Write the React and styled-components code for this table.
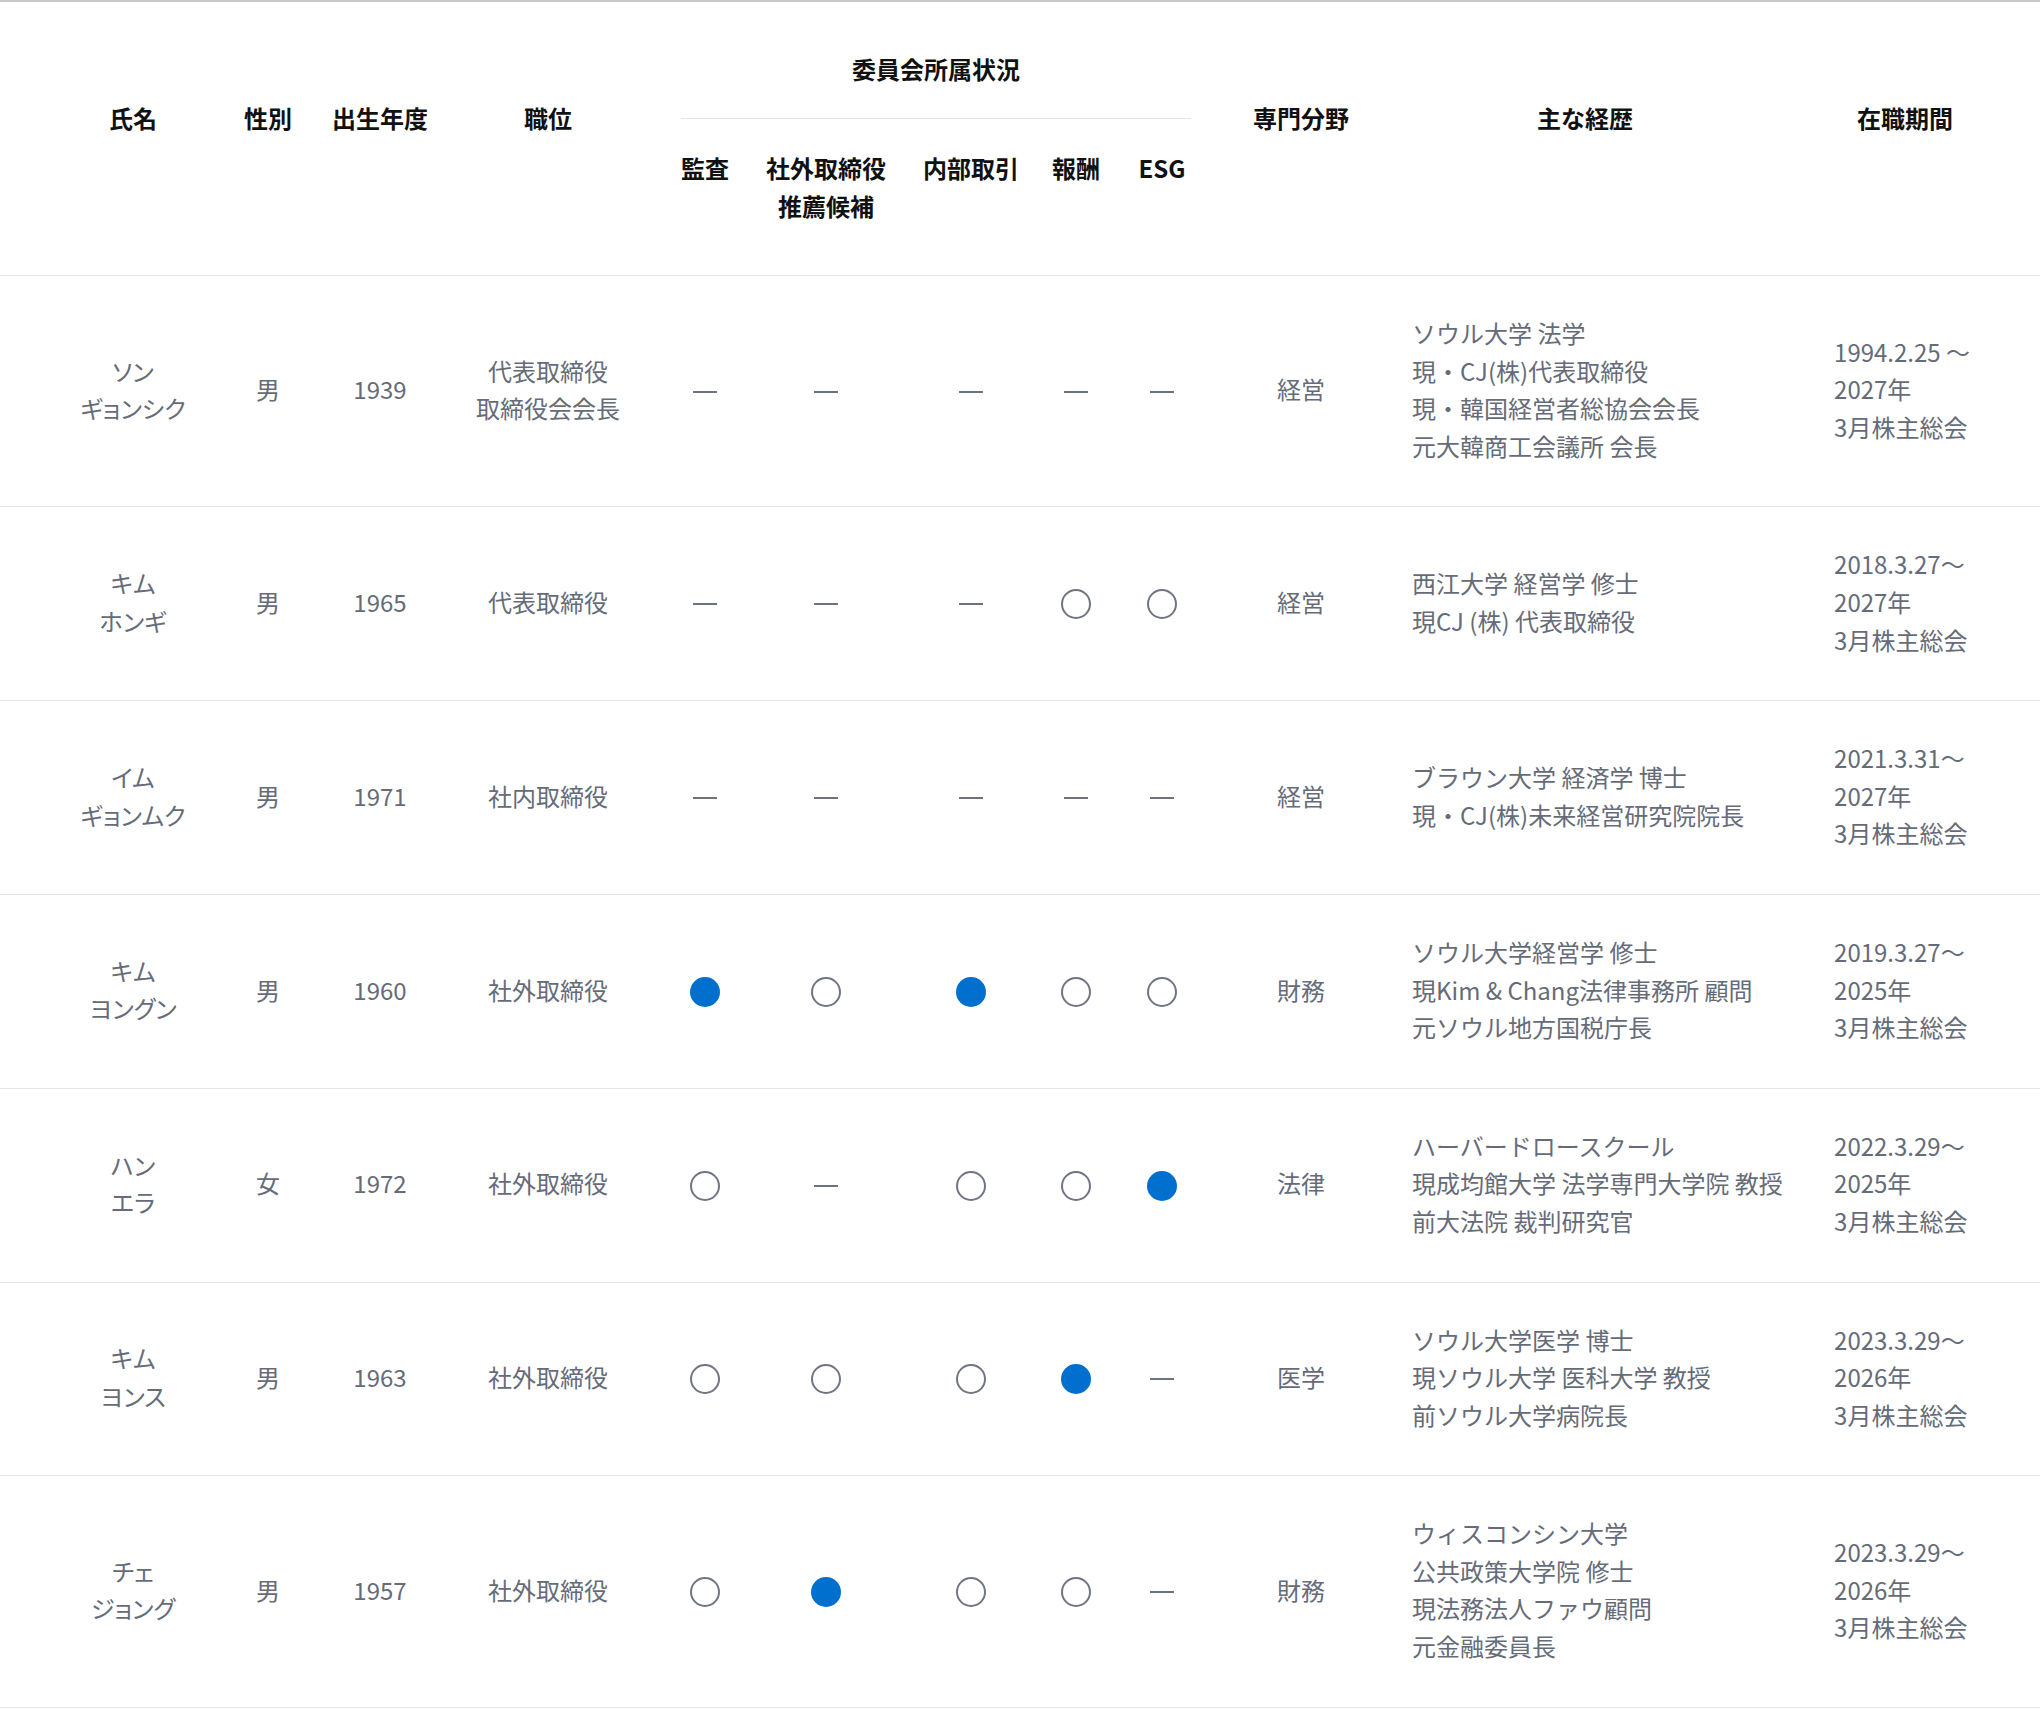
import React from 'react';
import styled, { createGlobalStyle } from 'styled-components';

const GlobalStyle = createGlobalStyle`
  body {
    margin: 0;
    background: #fff;
    font-family: "Noto Sans CJK JP", "Noto Sans", sans-serif;
  }
`;

const Wrapper = styled.div`
  width: 2040px;
  border-top: 2px solid #c9c9c9;
`;

const Table = styled.table`
  width: 100%;
  table-layout: fixed;
  border-collapse: separate;
  border-spacing: 0;
`;

const HeadCell = styled.th`
  padding: ${(p) => (p.$span ? '97px 0 0' : '30px 0 50px')};
  padding-right: ${(p) => p.$padRight || 0}px;
  padding-left: ${(p) => p.$padLeft || 0}px;
  vertical-align: top;
  text-align: center;
  font-size: 24px;
  line-height: 38px;
  font-weight: 700;
  color: #111;
  border-bottom: 1px solid #e5e5e5;
`;

const GroupCell = styled.th`
  padding: 48px 29px 0;
  vertical-align: top;
  font-size: 24px;
  line-height: 38px;
  font-weight: 700;
  color: #111;
`;

const GroupTitle = styled.div`
  padding-bottom: 30px;
  border-bottom: 1px solid #e5e5e5;
`;

const Cell = styled.td`
  padding: 38px 0 42px;
  padding-left: ${(p) => p.$padLeft || 0}px;
  vertical-align: middle;
  text-align: ${(p) => p.$align || 'center'};
  font-size: 24px;
  line-height: 37.6px;
  color: #656b78;
  border-bottom: 1px solid #e5e5e5;
  font-feature-settings: ${(p) => (p.$palt ? '"palt"' : 'normal')};
`;

const Line = styled.div`
  white-space: nowrap;
`;

const Dash = styled.span`
  display: block;
  width: 24px;
  height: 2px;
  margin: 5px auto 0;
  background: #6b7280;
`;

const Circle = styled.span`
  display: block;
  box-sizing: border-box;
  width: 30px;
  height: 30px;
  margin: 5px auto 0;
  border-radius: 50%;
  border: ${(p) => (p.$filled ? 'none' : '2px solid #6f7583')};
  background: ${(p) => (p.$filled ? '#006fcd' : 'transparent')};
`;

const widths = [220, 96, 128, 208, 106, 136, 154, 56, 116, 162, 406, 252];

const rows = [
  {
    name: ['ソン', 'ギョンシク'], sex: '男', year: '1939', pos: ['代表取締役', '取締役会会長'],
    marks: ['-', '-', '-', '-', '-'], field: '経営',
    career: ['ソウル大学 法学', '現・CJ(株)代表取締役', '現・韓国経営者総協会会長', '元大韓商工会議所 会長'],
    term: ['1994.2.25 ～', '2027年', '3月株主総会'],
  },
  {
    name: ['キム', 'ホンギ'], sex: '男', year: '1965', pos: ['代表取締役'],
    marks: ['-', '-', '-', 'o', 'o'], field: '経営',
    career: ['西江大学 経営学 修士', '現CJ (株) 代表取締役'],
    term: ['2018.3.27～', '2027年', '3月株主総会'],
  },
  {
    name: ['イム', 'ギョンムク'], sex: '男', year: '1971', pos: ['社内取締役'],
    marks: ['-', '-', '-', '-', '-'], field: '経営',
    career: ['ブラウン大学 経済学 博士', '現・CJ(株)未来経営研究院院長'],
    term: ['2021.3.31～', '2027年', '3月株主総会'],
  },
  {
    name: ['キム', 'ヨングン'], sex: '男', year: '1960', pos: ['社外取締役'],
    marks: ['x', 'o', 'x', 'o', 'o'], field: '財務',
    career: ['ソウル大学経営学 修士', '現Kim & Chang法律事務所 顧問', '元ソウル地方国税庁長'],
    term: ['2019.3.27～', '2025年', '3月株主総会'],
  },
  {
    name: ['ハン', 'エラ'], sex: '女', year: '1972', pos: ['社外取締役'],
    marks: ['o', '-', 'o', 'o', 'x'], field: '法律',
    career: ['ハーバードロースクール', '現成均館大学 法学専門大学院 教授', '前大法院 裁判研究官'],
    term: ['2022.3.29～', '2025年', '3月株主総会'],
  },
  {
    name: ['キム', 'ヨンス'], sex: '男', year: '1963', pos: ['社外取締役'],
    marks: ['o', 'o', 'o', 'x', '-'], field: '医学',
    career: ['ソウル大学医学 博士', '現ソウル大学 医科大学 教授', '前ソウル大学病院長'],
    term: ['2023.3.29～', '2026年', '3月株主総会'],
  },
  {
    name: ['チェ', 'ジョング'], sex: '男', year: '1957', pos: ['社外取締役'],
    marks: ['o', 'x', 'o', 'o', '-'], field: '財務',
    career: ['ウィスコンシン大学', '公共政策大学院 修士', '現法務法人ファウ顧問', '元金融委員長'],
    term: ['2023.3.29～', '2026年', '3月株主総会'],
  },
];

function Mark({ kind }) {
  if (kind === '-') return <Dash />;
  return <Circle $filled={kind === 'x'} />;
}

const Lines = ({ items }) => items.map((t, i) => <Line key={i}>{t}</Line>);

export default function App() {
  return (
    <>
      <GlobalStyle />
      <Wrapper>
        <Table>
          <colgroup>
            {widths.map((w, i) => <col key={i} style={{ width: w }} />)}
          </colgroup>
          <thead>
            <tr>
              <HeadCell rowSpan={2} $span $padLeft={46}>氏名</HeadCell>
              <HeadCell rowSpan={2} $span>性別</HeadCell>
              <HeadCell rowSpan={2} $span>出生年度</HeadCell>
              <HeadCell rowSpan={2} $span>職位</HeadCell>
              <GroupCell colSpan={5}>
                <GroupTitle>委員会所属状況</GroupTitle>
              </GroupCell>
              <HeadCell rowSpan={2} $span>専門分野</HeadCell>
              <HeadCell rowSpan={2} $span>主な経歴</HeadCell>
              <HeadCell rowSpan={2} $span $padRight={18}>在職期間</HeadCell>
            </tr>
            <tr>
              <HeadCell>監査</HeadCell>
              <HeadCell>社外取締役<br />推薦候補</HeadCell>
              <HeadCell>内部取引</HeadCell>
              <HeadCell>報酬</HeadCell>
              <HeadCell>ESG</HeadCell>
            </tr>
          </thead>
          <tbody>
            {rows.map((r, i) => (
              <tr key={i}>
                <Cell $padLeft={46} $palt><Lines items={r.name} /></Cell>
                <Cell>{r.sex}</Cell>
                <Cell>{r.year}</Cell>
                <Cell><Lines items={r.pos} /></Cell>
                {r.marks.map((m, j) => (
                  <Cell key={j}><Mark kind={m} /></Cell>
                ))}
                <Cell>{r.field}</Cell>
                <Cell $align="left" $padLeft={30}><Lines items={r.career} /></Cell>
                <Cell $align="left" $padLeft={46}><Lines items={r.term} /></Cell>
              </tr>
            ))}
          </tbody>
        </Table>
      </Wrapper>
    </>
  );
}
